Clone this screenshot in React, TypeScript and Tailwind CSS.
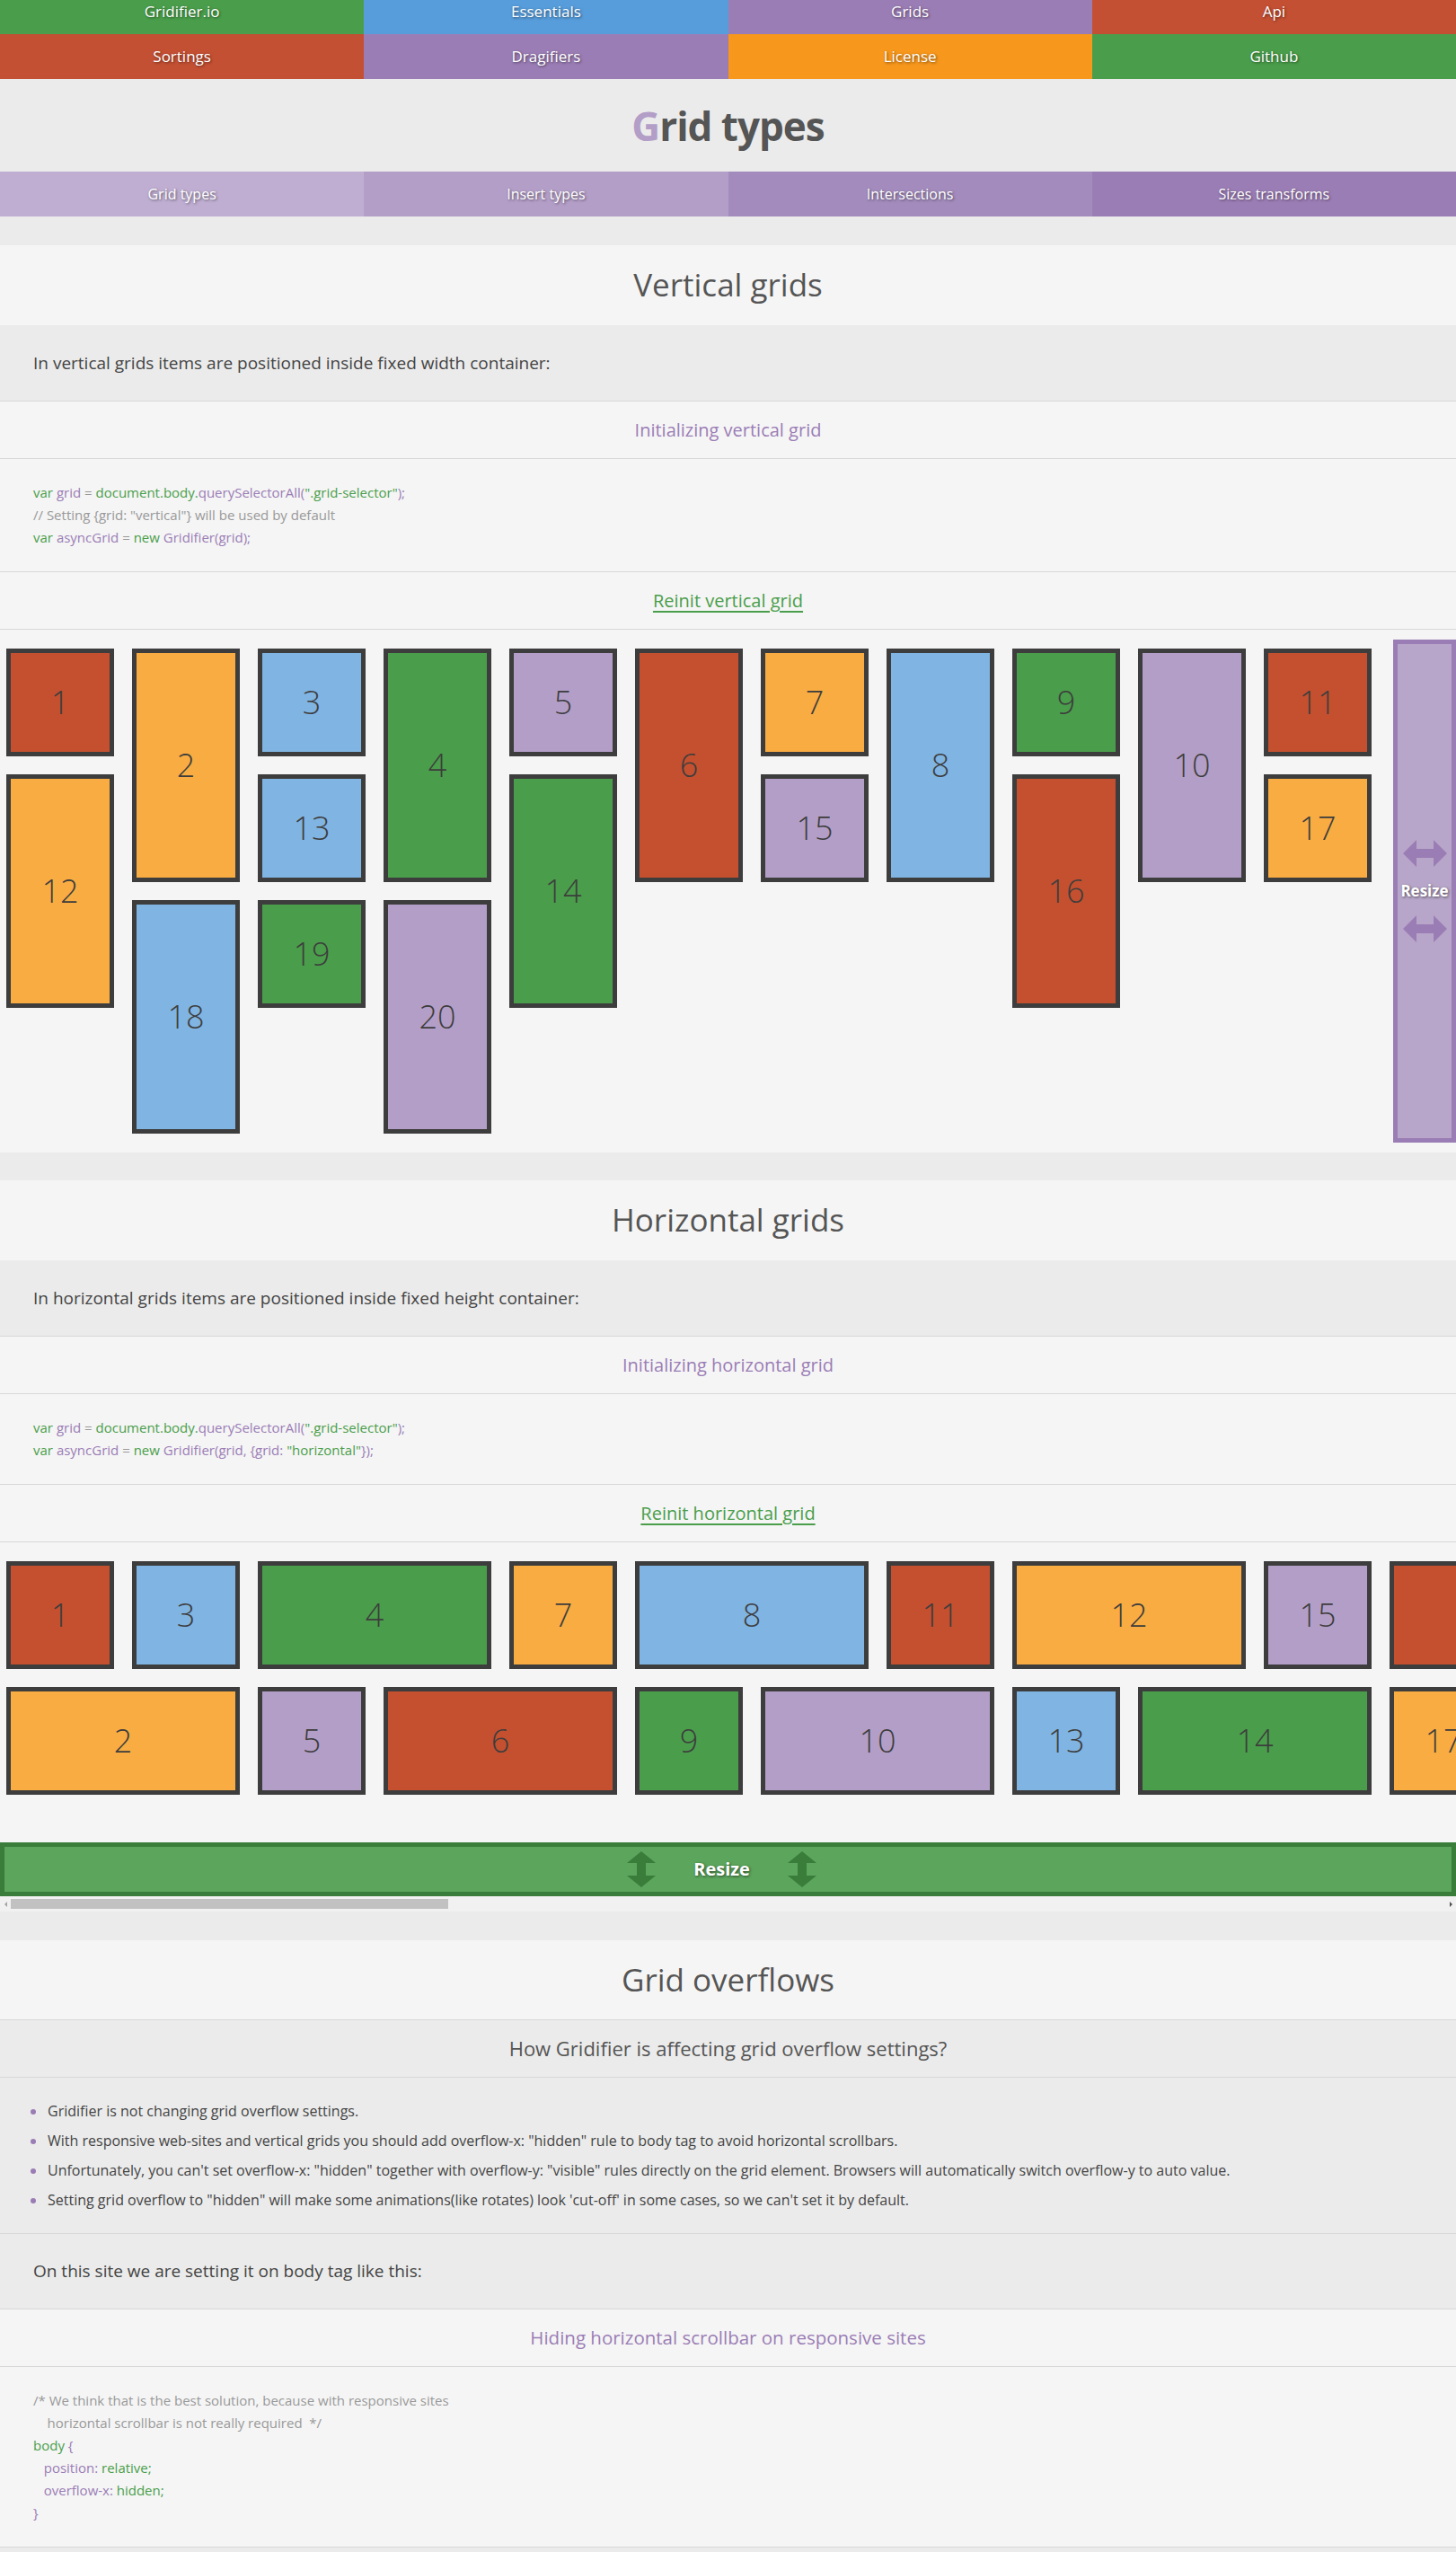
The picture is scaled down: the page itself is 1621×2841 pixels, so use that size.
import React from "react";

type Item = [number, string, number];

const colors: Record<string, string> = {
  r: "bg-[#c4502f]",
  o: "bg-[#f8ac42]",
  b: "bg-[#80b4e2]",
  g: "bg-[#4a9e4b]",
  p: "bg-[#b39ec7]",
};

const verticalColumns: Item[][] = [
  [[1, "r", 1], [12, "o", 2]],
  [[2, "o", 2], [18, "b", 2]],
  [[3, "b", 1], [13, "b", 1], [19, "g", 1]],
  [[4, "g", 2], [20, "p", 2]],
  [[5, "p", 1], [14, "g", 2]],
  [[6, "r", 2]],
  [[7, "o", 1], [15, "p", 1]],
  [[8, "b", 2]],
  [[9, "g", 1], [16, "r", 2]],
  [[10, "p", 2]],
  [[11, "r", 1], [17, "o", 1]],
];

const horizontalRows: Item[][] = [
  [[1, "r", 1], [3, "b", 1], [4, "g", 2], [7, "o", 1], [8, "b", 2], [11, "r", 1], [12, "o", 2], [15, "p", 1], [16, "r", 2]],
  [[2, "o", 2], [5, "p", 1], [6, "r", 2], [9, "g", 1], [10, "p", 2], [13, "b", 1], [14, "g", 2], [17, "o", 1]],
];

const topNav = [
  ["Gridifier.io", "bg-[#4a9e4b]"],
  ["Essentials", "bg-[#579ddb]"],
  ["Grids", "bg-[#9b7db5]"],
  ["Api", "bg-[#c45033]"],
];

const topNav2 = [
  ["Sortings", "bg-[#c45033]"],
  ["Dragifiers", "bg-[#9b7db5]"],
  ["License", "bg-[#f7971c]"],
  ["Github", "bg-[#4a9e4b]"],
];

const subNav = [
  ["Grid types", "bg-[#bfaed2]"],
  ["Insert types", "bg-[#b39ec7]"],
  ["Intersections", "bg-[#a38cbd]"],
  ["Sizes transforms", "bg-[#9b7db5]"],
];

const shadow = "[text-shadow:1px_1px_3px_rgba(0,0,0,0.55)]";

const G = ({ children }: { children: React.ReactNode }) => <span className="text-[#4a9e4b]">{children}</span>;
const P = ({ children }: { children: React.ReactNode }) => <span className="text-[#9b7db5]">{children}</span>;
const Gr = ({ children }: { children: React.ReactNode }) => <span className="text-[#999]">{children}</span>;

const Box = ({ item, vertical }: { item: Item; vertical: boolean }) => {
  const [n, c, span] = item;
  const size = vertical
    ? span === 2
      ? "w-[120px] h-[260px]"
      : "w-[120px] h-[120px]"
    : span === 2
      ? "w-[260px] h-[120px]"
      : "w-[120px] h-[120px]";
  return (
    <div
      className={`${size} ${colors[c]} shrink-0 flex items-center justify-center border-[5px] border-[#3d3d3d] text-[#3d3d3d] text-[36px] font-light`}
    >
      {n}
    </div>
  );
};

const HArrows = () => (
  <svg width="49" height="30" viewBox="0 0 49 30">
    <polygon points="0,15 15,0 15,10 34,10 34,0 49,15 34,30 34,20 15,20 15,30" fill="#9b7db5" />
  </svg>
);

const VArrows = () => (
  <svg width="32" height="40" viewBox="0 0 32 40">
    <polygon points="16,0 32,13 21,13 21,27 32,27 16,40 0,27 11,27 11,13 0,13" fill="#3a7d3b" />
  </svg>
);

type SectionProps = {
  title: string;
  desc: string;
  initTitle: string;
  code: React.ReactNode;
  reinit: string;
  children: React.ReactNode;
};

const Section = ({ title, desc, initTitle, code, reinit, children }: SectionProps) => (
  <div>
    <div className="h-[89px] bg-[#f5f5f5] flex items-center justify-center text-[35px] text-[#555]">
      {title}
    </div>
    <div className="h-[85px] bg-[#ebebeb] border-b border-[#d8d8d8] flex items-center px-[37px] text-[19px] text-[#444]">
      {desc}
    </div>
    <div className="h-[64px] bg-[#f5f5f5] border-b border-[#d8d8d8] flex items-center justify-center text-[20px] text-[#9b7db5]">
      {initTitle}
    </div>
    <div className="bg-[#f5f5f5] border-b border-[#d8d8d8] py-[25px] px-[37px] text-[15px] leading-[25px]">
      {code}
    </div>
    <div className="h-[64px] bg-[#f5f5f5] border-b border-[#d8d8d8] flex items-center justify-center">
      <a className="text-[20px] text-[#4a9e4b] underline underline-offset-4 decoration-2">{reinit}</a>
    </div>
    {children}
  </div>
);

export default function App() {
  return (
    <div className="w-full overflow-x-hidden bg-[#ebebeb] font-['Open_Sans',sans-serif] pb-[6px]">
      <div className="grid grid-cols-4 text-white">
        {topNav.map(([label, bg]) => (
          <div key={label} className={`${bg} h-[38px] text-center text-[17px] leading-[26px] ${shadow}`}>
            {label}
          </div>
        ))}
        {topNav2.map(([label, bg]) => (
          <div key={label} className={`${bg} h-[50px] text-center text-[17px] leading-[50px] ${shadow}`}>
            {label}
          </div>
        ))}
      </div>

      <div className="h-[103px] flex items-center justify-center text-[44px] font-bold tracking-[-1px] text-[#555]">
        <span className="text-[#b39ec7]">G</span>rid types
      </div>

      <div className="grid grid-cols-4 text-white text-[16px]">
        {subNav.map(([label, bg]) => (
          <div key={label} className={`${bg} h-[50px] text-center leading-[50px] ${shadow}`}>
            {label}
          </div>
        ))}
      </div>

      <div className="h-[32px]" />

      <Section
        title="Vertical grids"
        desc="In vertical grids items are positioned inside fixed width container:"
        initTitle="Initializing vertical grid"
        reinit="Reinit vertical grid"
        code={
          <>
            <div>
              <G>var</G> <P>grid</P> <Gr>=</Gr> <G>document.body.</G>
              <P>querySelectorAll(</P>
              <G>".grid-selector"</G>
              <P>);</P>
            </div>
            <div>
              <Gr>// Setting {"{"}grid: "vertical"{"}"} will be used by default</Gr>
            </div>
            <div>
              <G>var</G> <P>asyncGrid</P> <Gr>=</Gr> <G>new</G> <P>Gridifier(grid);</P>
            </div>
          </>
        }
      >
        <div className="bg-[#f5f5f5] flex items-start py-[11px] pl-[7px] gap-5">
          {verticalColumns.map((col, i) => (
            <div key={i} className="flex flex-col gap-5 pt-[10px] shrink-0">
              {col.map((item) => (
                <Box key={item[0]} item={item} vertical />
              ))}
            </div>
          ))}
          <div className="ml-[4px] w-[70px] h-[560px] shrink-0 bg-[#b7a6c9] border-[5px] border-[#9b7db5] flex flex-col items-center justify-center gap-[14px]">
            <HArrows />
            <span className={`text-white text-[17px] font-bold ${shadow}`}>Resize</span>
            <HArrows />
          </div>
        </div>
      </Section>

      <div className="h-[31px]" />

      <Section
        title="Horizontal grids"
        desc="In horizontal grids items are positioned inside fixed height container:"
        initTitle="Initializing horizontal grid"
        reinit="Reinit horizontal grid"
        code={
          <>
            <div>
              <G>var</G> <P>grid</P> <Gr>=</Gr> <G>document.body.</G>
              <P>querySelectorAll(</P>
              <G>".grid-selector"</G>
              <P>);</P>
            </div>
            <div>
              <G>var</G> <P>asyncGrid</P> <Gr>=</Gr> <G>new</G> <P>Gridifier(grid, {"{"}grid: </P>
              <G>"horizontal"</G>
              <P>{"}"});</P>
            </div>
          </>
        }
      >
        <div className="bg-[#f5f5f5] overflow-hidden">
          <div className="flex flex-col gap-5 pt-[21px] pl-[7px]">
            {horizontalRows.map((row, i) => (
              <div key={i} className="flex gap-5">
                {row.map((item) => (
                  <Box key={item[0]} item={item} vertical={false} />
                ))}
              </div>
            ))}
          </div>
          <div className="mt-[53px] h-[60px] bg-[#5ba55c] border-[5px] border-[#3a7d3b] pr-[14px] flex items-center justify-center gap-[42px]">
            <VArrows />
            <span className={`text-white text-[20px] font-bold ${shadow}`}>Resize</span>
            <VArrows />
          </div>
          <div className="h-[17px] bg-[#f1f1f1] flex items-center">
            <div className="w-[12px] flex justify-center">
              <div className="w-0 h-0 border-y-[3px] border-y-transparent border-r-[3px] border-r-[#a3a3a3]" />
            </div>
            <div className="w-[487px] h-[11px] bg-[#c1c1c1]" />
            <div className="flex-1" />
            <div className="w-[12px] flex justify-center">
              <div className="w-0 h-0 border-y-[3px] border-y-transparent border-l-[3px] border-l-[#505050]" />
            </div>
          </div>
        </div>
      </Section>

      <div className="h-[32px]" />

      <div>
        <div className="h-[89px] bg-[#f5f5f5] border-b border-[#d8d8d8] flex items-center justify-center text-[35px] text-[#555]">
          Grid overflows
        </div>
        <div className="h-[64px] bg-[#ebebeb] border-b border-[#d8d8d8] flex items-center justify-center text-[22px] text-[#555]">
          How Gridifier is affecting grid overflow settings?
        </div>
        <ul className="bg-[#ebebeb] border-b border-[#d8d8d8] pt-[21px] pb-[20px] text-[16px] leading-[33px] text-[#444]">
          {[
            "Gridifier is not changing grid overflow settings.",
            'With responsive web-sites and vertical grids you should add overflow-x: "hidden" rule to body tag to avoid horizontal scrollbars.',
            'Unfortunately, you can\'t set overflow-x: "hidden" together with overflow-y: "visible" rules directly on the grid element. Browsers will automatically switch overflow-y to auto value.',
            "Setting grid overflow to \"hidden\" will make some animations(like rotates) look 'cut-off' in some cases, so we can't set it by default.",
          ].map((t) => (
            <li key={t} className="flex items-center">
              <span className="w-[6px] h-[6px] rounded-full bg-[#9b7db5] ml-[34px] mr-[13px]" />
              {t}
            </li>
          ))}
        </ul>
        <div className="h-[84px] bg-[#ebebeb] border-b border-[#d8d8d8] flex items-center px-[37px] text-[19px] text-[#444]">
          On this site we are setting it on body tag like this:
        </div>
        <div className="h-[64px] bg-[#f5f5f5] border-b border-[#d8d8d8] flex items-center justify-center text-[20.5px] text-[#9b7db5]">
          Hiding horizontal scrollbar on responsive sites
        </div>
        <div className="bg-[#f5f5f5] border-b border-[#d8d8d8] py-[25px] px-[37px] text-[15px] leading-[25px] whitespace-pre">
          <div>
            <Gr>/* We think that is the best solution, because with responsive sites</Gr>
          </div>
          <div>
            <Gr>{"    horizontal scrollbar is not really required  */"}</Gr>
          </div>
          <div>
            <G>body</G> <P>{"{"}</P>
          </div>
          <div>
            {"   "}
            <P>position:</P> <G>relative;</G>
          </div>
          <div>
            {"   "}
            <P>overflow-x:</P> <G>hidden;</G>
          </div>
          <div>
            <P>{"}"}</P>
          </div>
        </div>
      </div>
    </div>
  );
}
